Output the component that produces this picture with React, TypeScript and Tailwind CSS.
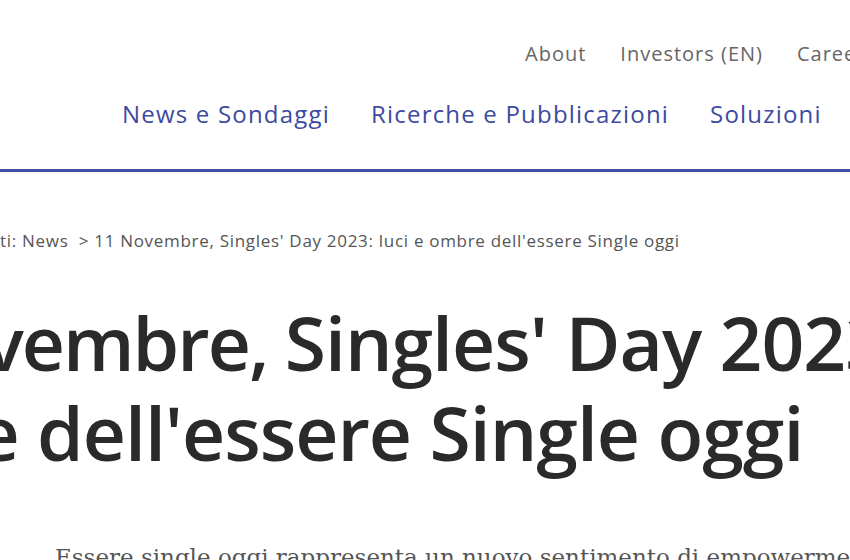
import React from "react";

const topLinks = ["About", "Investors (EN)", "Careers"];
const mainLinks = ["News e Sondaggi", "Ricerche e Pubblicazioni", "Soluzioni"];

export default function App() {
  return (
    <div className="w-[850px] h-[560px] overflow-hidden bg-white" style={{ fontFamily: '"Open Sans", sans-serif' }}>
      {/* Header */}
      <header className="border-b-[3px] border-[#4350a5]">
        <nav className="flex gap-[34px] whitespace-nowrap pt-[40px] ml-[525px] text-[20px] leading-[28px] tracking-[1px] text-[#666666]">
          {topLinks.map((l) => (
            <a key={l} href="#">
              {l}
            </a>
          ))}
        </nav>
        <nav className="flex gap-[41px] whitespace-nowrap mt-[30px] pb-[39px] ml-[122px] text-[24px] leading-[32px] tracking-[1.2px] text-[#3d4aa0]">
          {mainLinks.map((l) => (
            <a key={l} href="#">
              {l}
            </a>
          ))}
        </nav>
      </header>

      {/* Breadcrumb */}
      <div className="mt-[57px] whitespace-nowrap text-[17px] leading-[24px] tracking-[0.7px] text-[#555555]">
        ti: News &nbsp;&gt; 11 Novembre, Singles' Day 2023: luci e ombre dell'essere Single oggi
      </div>

      {/* Title */}
      <h1 className="mt-[44px] ml-[-216px] whitespace-nowrap text-[75px] leading-[90px] font-semibold text-[#2a2a2a] tracking-[-1px]">
        <span className="tracking-[-2px]">11 Novembre, </span>Singles' Day 2023: luci e
        <br />
        ombre dell'essere Single oggi
      </h1>

      {/* Body */}
      <p
        className="mt-[64px] ml-[55px] whitespace-nowrap text-[23px] leading-[32px] text-[#555555]"
        style={{ fontFamily: '"DejaVu Serif", serif' }}
      >
        Essere single oggi rappresenta un nuovo sentimento di empowerment
      </p>
    </div>
  );
}
